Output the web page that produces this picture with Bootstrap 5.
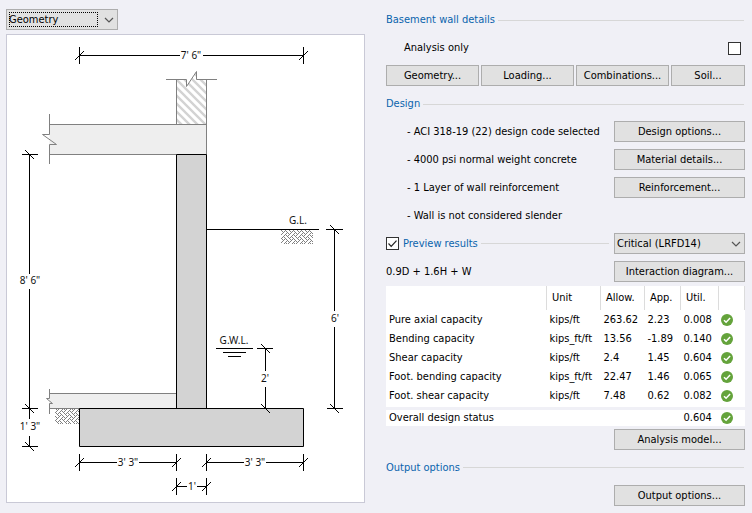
<!DOCTYPE html>
<html lang="en">
<head>
<meta charset="utf-8">
<meta name="viewport" content="width=device-width, initial-scale=1">
<title>Basement wall</title>
<link href="https://cdn.jsdelivr.net/npm/bootstrap@5.3.0/dist/css/bootstrap.min.css" rel="stylesheet">
<style>
  body {
    background: #f0f0f6;
    color: #000;
    font: 11px/14px Tahoma, "DejaVu Sans Condensed", "Noto Sans", sans-serif;
  }
  .page-shell { display: grid; grid-template-columns: 1fr 1fr; column-gap: 21px; padding: 9px 7px 7px 6px; }
  .form-select, .btn {
    --bs-btn-font-size: 11px;
    --bs-btn-line-height: 14px;
    --bs-btn-border-radius: 0;
    height: 21px;
    padding: 0 2px;
    border: 1px solid #adadad;
    border-radius: 0;
    background-color: #e1e1e1;
    color: #000;
    font-size: 11px;
    line-height: 14px;
  }
  .btn { padding-top: 1px; }
  .form-select {
    padding: 0 20px 0 2px;
    background-image: url("data:image/svg+xml,%3Csvg xmlns='http://www.w3.org/2000/svg' viewBox='0 0 10 6'%3E%3Cpath d='M1 1l4 4 4-4' fill='none' stroke='%23555' stroke-width='1.2'/%3E%3C/svg%3E");
    background-size: 10px 6px;
    background-position: right 3px center;
  }
  .view-picker { width: 112px; margin-bottom: 4px; }
  .view-picker::after {
    content: "";
    position: absolute;
    inset: 3px 20px 3px 3px;
    border: 1px dotted #000;
    pointer-events: none;
  }
  .drawing { border: 1px solid #c9c9d6; background: #fff; }
  .drawing svg { display: block; width: 100%; height: auto; }
  .drawing text { font: 10px "Noto Sans", sans-serif; fill: #111; text-anchor: middle; }
  .section-head { display: flex; align-items: center; gap: 3px; height: 14px; color: #0a64ad; }
  .section-head::after { content: ""; flex: 1; height: 1px; background: #d7d7d7; margin-right: 1px; }
  .form-check-input[type=checkbox] {
    width: 13px; height: 13px; margin: 0; flex: none;
    border: 1px solid #333; border-radius: 0; background-color: #fff;
  }
  .form-check-input:checked[type=checkbox] {
    border-color: #333; background-color: #fff;
    background-image: url("data:image/svg+xml,%3Csvg xmlns='http://www.w3.org/2000/svg' viewBox='0 0 11 11'%3E%3Cpath d='M1.5 5.5l2.7 2.8 5.3-5.6' fill='none' stroke='%23222' stroke-width='1.2'/%3E%3C/svg%3E");
  }
  .button-row { display: grid; grid-template-columns: 93fr 93fr 93fr 74fr; gap: 2px; margin-bottom: 11px; }
  .side-control { width: 131px; flex: none; }
  .design-list { display: grid; gap: 7px; margin: 10px 0 7px; }
  .design-list > div { display: flex; align-items: center; justify-content: space-between; min-height: 21px; padding-left: 21px; }
  .analysis-row { padding: 0 4px 0 18px; margin: 14px 0 10px; }
  .combo-row { margin: 7px 0 4px; }
  .model-row { margin: 3px 0 11px; }
  .output-row { margin-top: 10px; }
  .results { width: 100%; table-layout: fixed; border-collapse: collapse; }
  .results th, .results td { font-weight: 400; padding: 0 0 0 3px; height: 19px; white-space: nowrap; }
  .results td:last-child { padding-left: 2px; }
  .results thead th { height: 24px; padding-left: 5px; border-right: 1px solid #dcdcdc; }
  .results thead, .results tbody { background: #fff; }
  .results tbody tr:last-child > * { height: 22px; padding-bottom: 1px; }
  .results tfoot > tr > * { height: 16px; line-height: 16px; background: #fff; }
  .results tfoot { border-top: 3px solid #f0f0f6; }
  .status-dot { display: block; width: 12px; height: 12px; }
</style>
<script src="https://cdn.jsdelivr.net/npm/bootstrap@5.3.0/dist/js/bootstrap.bundle.min.js"></script>
</head>
<body>
<svg width="0" height="0" class="position-absolute" aria-hidden="true">
  <symbol id="ok" viewBox="0 0 12 12">
    <circle cx="6" cy="6" r="6" fill="#64a33b"/>
    <path d="M3 6.2l2.1 2.1 4-4.2" fill="none" stroke="#fff" stroke-width="1.5"/>
  </symbol>
</svg>
<main class="page-shell">
  <section>
    <div class="view-picker position-relative">
      <select class="form-select" aria-label="View"><option>Geometry</option></select>
    </div>
    <div class="drawing">
      <svg viewBox="7 35 357 467" role="img" aria-label="Basement wall geometry">
        <defs>
          <pattern id="diag" width="8" height="8" patternUnits="userSpaceOnUse" x="177" y="80">
            <path d="M-2 -2l12 12M-2 6l4 4M6 -2l4 4" stroke="#d3d3d3" stroke-width="2.4"/>
          </pattern>
          <pattern id="soil" width="8" height="8" patternUnits="userSpaceOnUse" x="281" y="230">
            <path d="M0 .5h1M4 .5h1M1 1.500h1M3 1.500h1M5 1.500h1M2 2.500h1M6 2.500h1M1 3.500h1M5 3.500h1M7 3.500h1M0 4.500h1M4 4.500h1M3 5.500h1M5 5.500h1M7 5.500h1M2 6.500h1M6 6.500h1M1 7.500h1M3 7.500h1M7 7.500h1" fill="none" stroke="#808080" shape-rendering="crispEdges"/>
          </pattern>
        </defs>
        <!-- Wall above, upper floor and lower slab -->
        <path d="M176.500 79.500H186.500V86.500L196.500 71.500V79.500H206.500V124.500H176.500Z" fill="url(#diag)"/>
        <path d="M49.500 124.500H206.500V154.500H49.500Z" fill="#eee"/>
        <path d="M49.500 393.500H176.500V408.500H49.500Z" fill="#eee"/>
        <g fill="none" stroke="#808080">
          <path d="M166 79.500H186.500V86.500L196.500 71.500V79.500H217M176.500 79.500V124.500M206.500 79.500V154.500M49.500 124.500H206.500M49.500 154.500H176.500"/>
          <path d="M49.500 114V134.500H42.500L56.500 144.500H49.500V164"/>
          <path d="M176.500 393.500H49.500M49.500 408.500H80M49.500 389V398.500H46.500L52.500 403.500H49.500V414"/>
        </g>
        <path d="M55 409H79V424H55Z" fill="url(#soil)"/>
        <path d="M281 230H313V244H281Z" fill="url(#soil)"/>
        <!-- Wall and footing -->
        <g fill="#d3d3d3" stroke="#000">
          <path d="M176.500 154.500H206.500V408.500H176.500Z"/>
          <path d="M79.500 408.500H303.500V446.500H79.500Z"/>
        </g>
        <!-- Ground and water levels, dimension lines -->
        <g fill="none" stroke="#000">
          <path d="M206.500 229.500H319M216 348.500H253M223 352.500H246M228 356.500H241"/>
          <path d="M79.500 55.500H180M203 55.500H303.500M79.500 47V64M303.500 47V64"/>
          <path d="M29.500 154.500V274M29.500 289V419M29.500 436V446.500M22 154.500H38M22 408.500H38M22 446.500H38"/>
          <path d="M334.500 229.500V311M334.500 327V408.500M326 229.500H343M327 408.500H343"/>
          <path d="M265.500 348.500V371M265.500 387V408.500M257 348.500H273M257 408.500H273"/>
          <path d="M79.500 462.500H117M139 462.500H176.500M206.500 462.500H244M266 462.500H303.500M79.500 454V471M176.500 454V471M206.500 454V471M303.500 454V471"/>
          <path d="M176.500 486.500H187M197 486.500H206.500M176.500 478V495M206.500 478V495"/>
          <path d="M75 60l9-9M299 60l9-9M75 467l9-9M172 467l9-9M202 467l9-9M299 467l9-9M172 491l9-9M202 491l9-9"/>
          <path d="M25 150l9 9M25 404l9 9M25 442l9 9M330 225l9 9M330 404l9 9M261 344l9 9M261 404l9 9"/>
        </g>
        <text x="191" y="59">7' 6"</text>
        <text x="30" y="284">8' 6"</text>
        <text x="30" y="430">1' 3"</text>
        <text x="128" y="466">3' 3"</text>
        <text x="255" y="466">3' 3"</text>
        <text x="192" y="490">1'</text>
        <text x="335" y="322">6'</text>
        <text x="265" y="382">2'</text>
        <text x="298" y="224">G.L.</text>
        <text x="234" y="344">G.W.L.</text>
      </svg>
    </div>
  </section>

  <section class="pt-1">
    <div class="section-head">Basement wall details</div>
    <div class="analysis-row d-flex align-items-center justify-content-between">
      <label for="analysis-only">Analysis only</label>
      <input class="form-check-input" type="checkbox" id="analysis-only">
    </div>
    <div class="button-row">
      <button type="button" class="btn">Geometry...</button>
      <button type="button" class="btn">Loading...</button>
      <button type="button" class="btn">Combinations...</button>
      <button type="button" class="btn">Soil...</button>
    </div>
    <div class="section-head">Design</div>
    <div class="design-list">
      <div><span>- ACI 318-19 (22) design code selected</span><button type="button" class="btn side-control">Design options...</button></div>
      <div><span>- 4000 psi normal weight concrete</span><button type="button" class="btn side-control">Material details...</button></div>
      <div><span>- 1 Layer of wall reinforcement</span><button type="button" class="btn side-control">Reinforcement...</button></div>
      <div><span>- Wall is not considered slender</span></div>
    </div>
    <div class="d-flex align-items-center">
      <input class="form-check-input me-1" type="checkbox" id="preview" checked>
      <div class="section-head flex-fill me-1"><label for="preview">Preview results</label></div>
      <select class="form-select side-control" aria-label="Load combination"><option>Critical (LRFD14)</option></select>
    </div>
    <div class="combo-row d-flex align-items-center justify-content-between">
      <span>0.9D + 1.6H + W</span>
      <button type="button" class="btn side-control">Interaction diagram...</button>
    </div>
    <table class="results">
      <colgroup><col><col style="width:54px"><col style="width:44px"><col style="width:36px"><col style="width:38px"><col style="width:26px"></colgroup>
      <thead><tr><th></th><th scope="col">Unit</th><th scope="col">Allow.</th><th scope="col">App.</th><th scope="col">Util.</th><th></th></tr></thead>
      <tbody>
        <tr><th scope="row">Pure axial capacity</th><td>kips/ft</td><td>263.62</td><td>2.23</td><td>0.008</td><td><svg class="status-dot"><use href="#ok"/></svg></td></tr>
        <tr><th scope="row">Bending capacity</th><td>kips_ft/ft</td><td>13.56</td><td>-1.89</td><td>0.140</td><td><svg class="status-dot"><use href="#ok"/></svg></td></tr>
        <tr><th scope="row">Shear capacity</th><td>kips/ft</td><td>2.4</td><td>1.45</td><td>0.604</td><td><svg class="status-dot"><use href="#ok"/></svg></td></tr>
        <tr><th scope="row">Foot. bending capacity</th><td>kips_ft/ft</td><td>22.47</td><td>1.46</td><td>0.065</td><td><svg class="status-dot"><use href="#ok"/></svg></td></tr>
        <tr><th scope="row">Foot. shear capacity</th><td>kips/ft</td><td>7.48</td><td>0.62</td><td>0.082</td><td><svg class="status-dot"><use href="#ok"/></svg></td></tr>
      </tbody>
      <tfoot>
        <tr><th scope="row">Overall design status</th><td></td><td></td><td></td><td>0.604</td><td><svg class="status-dot"><use href="#ok"/></svg></td></tr>
      </tfoot>
    </table>
    <div class="model-row text-end"><button type="button" class="btn side-control">Analysis model...</button></div>
    <div class="section-head">Output options</div>
    <div class="output-row text-end"><button type="button" class="btn side-control">Output options...</button></div>
  </section>
</main>
</body>
</html>
